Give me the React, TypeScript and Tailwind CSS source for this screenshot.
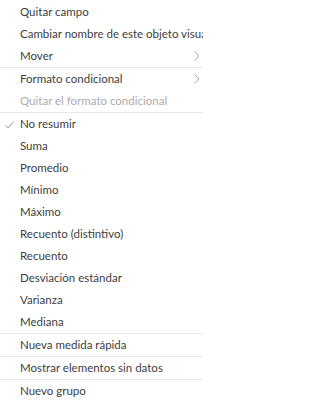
type Item = {
  label: string;
  disabled?: boolean;
  checked?: boolean;
  submenu?: boolean;
  separatorAfter?: boolean;
};

const items: Item[] = [
  { label: "Quitar campo" },
  { label: "Cambiar nombre de este objeto visual" },
  { label: "Mover", submenu: true, separatorAfter: true },
  { label: "Formato condicional", submenu: true },
  { label: "Quitar el formato condicional", disabled: true, separatorAfter: true },
  { label: "No resumir", checked: true },
  { label: "Suma" },
  { label: "Promedio" },
  { label: "Mínimo" },
  { label: "Máximo" },
  { label: "Recuento (distintivo)" },
  { label: "Recuento" },
  { label: "Desviación estándar" },
  { label: "Varianza" },
  { label: "Mediana", separatorAfter: true },
  { label: "Nueva medida rápida", separatorAfter: true },
  { label: "Mostrar elementos sin datos", separatorAfter: true },
  { label: "Nuevo grupo" },
];

function Check() {
  return (
    <svg width="9" height="8" viewBox="0 0 9 8" className="text-[#777]">
      <path d="M0.5 4.2 L3 6.8 L8.5 0.8" fill="none" stroke="currentColor" strokeWidth="0.8" />
    </svg>
  );
}

function Chevron() {
  return (
    <svg width="6" height="10" viewBox="0 0 6 10" className="text-[#999]">
      <path d="M0.5 0.5 L5 5 L0.5 9.5" fill="none" stroke="currentColor" strokeWidth="0.8" />
    </svg>
  );
}

export default function App() {
  return (
    <div className="w-[203px] h-[400px] overflow-hidden bg-white pt-px font-['Lato',sans-serif] text-[11.5px]">
      {items.map((item) => (
        <div key={item.label}>
          <div className="relative flex items-center h-[22px] pl-5 pr-2 whitespace-nowrap">
            {item.checked && (
              <span className="absolute left-[5px] top-[8px] flex">
                <Check />
              </span>
            )}
            <span className={item.disabled ? "text-[#ababab]" : "text-[#404040]"}>{item.label}</span>
            {item.submenu && (
              <span className="absolute right-[3px] top-[6px] flex">
                <Chevron />
              </span>
            )}
          </div>
          {item.separatorAfter && <div className="h-px bg-[#e8e8e8]" />}
        </div>
      ))}
    </div>
  );
}
